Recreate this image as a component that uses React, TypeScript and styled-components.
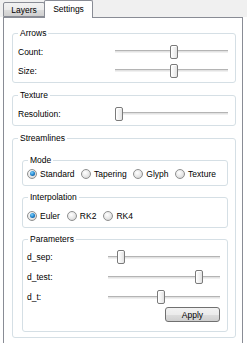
import React from 'react';
import styled, { createGlobalStyle } from 'styled-components';

const Global = createGlobalStyle`
  html, body { margin: 0; padding: 0; background: #ffffff; }
  body {
    font-family: "Liberation Sans", Arial, sans-serif;
    font-size: 8px;
    color: #000;
  }
`;

const Window = styled.div`
  width: 247px;
  height: 343px;
  overflow: hidden;
  background: #ffffff;
  display: flex;
  flex-direction: column;
`;

const TabBar = styled.div`
  display: flex;
  align-items: flex-end;
  flex: none;
  height: 17px;
  padding-left: 3px;
  position: relative;
  z-index: 1;
  background: #f0f0f0;
`;

const Tab = styled.div<{ $active?: boolean }>`
  box-sizing: border-box;
  display: flex;
  align-items: center;
  justify-content: center;
  border: 1px solid #898c95;
  border-bottom: ${(p) => (p.$active ? 'none' : '1px solid #898c95')};
  border-radius: 2px 2px 0 0;
  width: ${(p) => (p.$active ? '49px' : '42px')};
  height: ${(p) => (p.$active ? '18px' : '15px')};
  margin-bottom: ${(p) => (p.$active ? '-1px' : '0')};
  margin-left: ${(p) => (p.$active ? '-1px' : '0')};
  padding-bottom: ${(p) => (p.$active ? '2px' : '0')};
  background: ${(p) =>
    p.$active
      ? '#ffffff'
      : 'linear-gradient(#f2f2f2 0%, #ebebeb 50%, #dddddd 51%, #cfcfcf 100%)'};
  font-size: 8.5px;
`;

const Pane = styled.div`
  box-sizing: border-box;
  margin-left: 3px;
  width: 240px;
  flex: none;
  height: 340px;
  border: 1px solid #898c95;
  background: #ffffff;
  padding: 15px 6px 0 8px;
  display: flex;
  flex-direction: column;
  gap: 12px;
`;

const Box = styled.div<{ $pt: number; $pb: number; $pl: number; $pr: number; $gap?: number }>`
  position: relative;
  box-sizing: border-box;
  border: 1px solid #d5dfe5;
  border-radius: 3px;
  padding: ${(p) => `${p.$pt}px ${p.$pr}px ${p.$pb}px ${p.$pl}px`};
  display: flex;
  flex-direction: column;
  gap: ${(p) => p.$gap ?? 0}px;
`;

const BoxTitle = styled.span`
  position: absolute;
  top: -6px;
  left: 5px;
  padding: 0 2px;
  background: #ffffff;
  line-height: 10px;
  font-size: 8.5px;
`;

const SliderRow = styled.div<{ $h: number; $label: number }>`
  display: grid;
  grid-template-columns: ${(p) => p.$label}px 1fr;
  align-items: center;
  height: ${(p) => p.$h}px;
`;

const Label = styled.span`
  font-size: 8.5px;
`;

const Track = styled.div`
  position: relative;
  height: 14px;
  display: flex;
  align-items: center;
`;

const Groove = styled.div`
  width: 100%;
  height: 3px;
  box-sizing: border-box;
  border-top: 1px solid #b4b4b4;
  background: #e2e2e2;
  border-bottom: 1px solid #f0f0f0;
`;

const Handle = styled.div`
  position: absolute;
  top: 0;
  width: 8px;
  height: 14px;
  box-sizing: border-box;
  border: 1px solid #7a7a7a;
  border-radius: 2px;
  background: linear-gradient(90deg, #fdfdfd 0%, #f3f3f3 50%, #e2e2e2 100%);
  box-shadow: inset 1px 1px 0 #ffffff;
`;

const RadioRow = styled.div<{ $h: number; $pl: number; $pr: number; $gap?: number; $spread?: boolean }>`
  display: flex;
  align-items: center;
  height: ${(p) => p.$h}px;
  padding: 0 ${(p) => p.$pr}px 0 ${(p) => p.$pl}px;
  justify-content: ${(p) => (p.$spread ? 'space-between' : 'flex-start')};
  gap: ${(p) => p.$gap ?? 0}px;
`;

const RadioItem = styled.label`
  display: flex;
  align-items: center;
  gap: 3px;
  font-size: 8.5px;
`;

const RadioCircle = styled.span<{ $checked?: boolean }>`
  box-sizing: border-box;
  width: 10px;
  height: 10px;
  border-radius: 50%;
  border: 1px solid #8e8f8f;
  background: radial-gradient(circle at 40% 35%, #ffffff 0%, #e6e6e6 55%, #c8c8c8 100%);
  display: flex;
  align-items: center;
  justify-content: center;
  &::after {
    content: '';
    display: ${(p) => (p.$checked ? 'block' : 'none')};
    width: 5px;
    height: 5px;
    border-radius: 50%;
    background: radial-gradient(circle at 40% 35%, #7fd3ff 0%, #1a7fc9 55%, #0c3f78 100%);
  }
`;

const ButtonRow = styled.div`
  display: flex;
  justify-content: flex-end;
`;

const Button = styled.button`
  box-sizing: border-box;
  width: 55px;
  height: 15px;
  padding: 0;
  border: 1px solid #707070;
  border-radius: 3px;
  background: linear-gradient(#f2f2f2 0%, #ebebeb 50%, #dddddd 51%, #cfcfcf 100%);
  font-family: "Liberation Sans", Arial, sans-serif;
  font-size: 8.5px;
  color: #000;
`;

type SliderProps = { label: string; value: number; h: number; labelW: number };

function Slider({ label, value, h, labelW }: SliderProps) {
  return (
    <SliderRow $h={h} $label={labelW}>
      <Label>{label}</Label>
      <Track>
        <Groove />
        <Handle style={{ left: `calc((100% - 8px) * ${value})` }} />
      </Track>
    </SliderRow>
  );
}

function Radio({ label, checked }: { label: string; checked?: boolean }) {
  return (
    <RadioItem>
      <RadioCircle $checked={checked} />
      {label}
    </RadioItem>
  );
}

export default function App() {
  return (
    <Window>
      <Global />
      <TabBar>
        <Tab>Layers</Tab>
        <Tab $active>Settings</Tab>
      </TabBar>
      <Pane>
        <Box $pt={8} $pb={2} $pl={5} $pr={7}>
          <BoxTitle>Arrows</BoxTitle>
          <Slider label="Count:" value={0.52} h={19} labelW={97} />
          <Slider label="Size:" value={0.52} h={19} labelW={97} />
        </Box>
        <Box $pt={8} $pb={2} $pl={5} $pr={7}>
          <BoxTitle>Texture</BoxTitle>
          <Slider label="Resolution:" value={0} h={19} labelW={97} />
        </Box>
        <Box $pt={21} $pb={5} $pl={9} $pr={7} $gap={11}>
          <BoxTitle>Streamlines</BoxTitle>
          <Box $pt={3} $pb={2} $pl={0} $pr={0}>
            <BoxTitle>Mode</BoxTitle>
            <RadioRow $h={19} $pl={4} $pr={11} $spread>
              <Radio label="Standard" checked />
              <Radio label="Tapering" />
              <Radio label="Glyph" />
              <Radio label="Texture" />
            </RadioRow>
          </Box>
          <Box $pt={8} $pb={2} $pl={0} $pr={0}>
            <BoxTitle>Interpolation</BoxTitle>
            <RadioRow $h={19} $pl={4} $pr={0} $gap={7}>
              <Radio label="Euler" checked />
              <Radio label="RK2" />
              <Radio label="RK4" />
            </RadioRow>
          </Box>
          <Box $pt={7} $pb={9} $pl={4} $pr={7}>
            <BoxTitle>Parameters</BoxTitle>
            <Slider label="d_sep:" value={0.09} h={20} labelW={81} />
            <Slider label="d_test:" value={0.84} h={20} labelW={81} />
            <Slider label="d_t:" value={0.47} h={20} labelW={81} />
            <ButtonRow>
              <Button>Apply</Button>
            </ButtonRow>
          </Box>
        </Box>
      </Pane>
    </Window>
  );
}
